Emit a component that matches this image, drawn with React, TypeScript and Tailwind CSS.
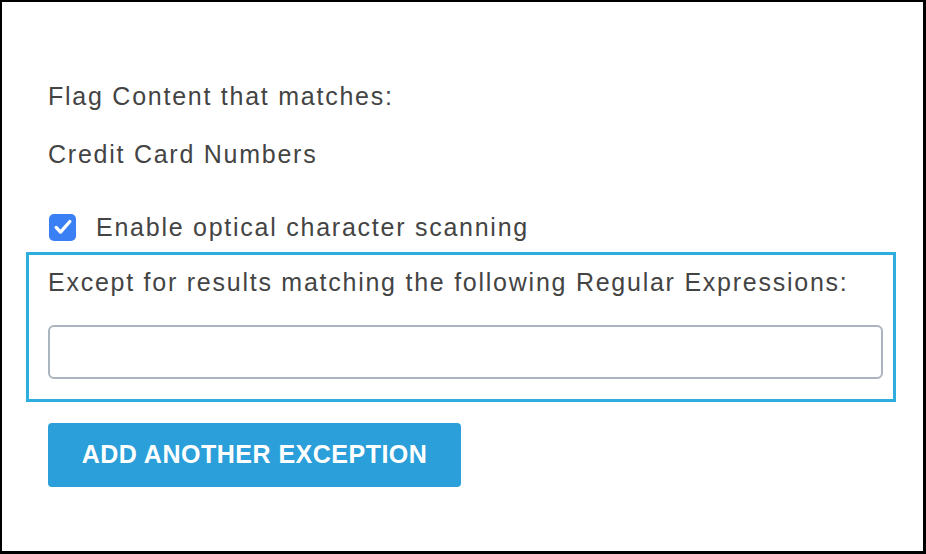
import React from "react";

export default function App() {
  return (
    <div
      className="w-[926px] h-[554px] bg-white border-black border-t-2 border-l-2 border-r-[3px] border-b-[3px] overflow-hidden text-[#444444]"
      style={{ fontFamily: '"Liberation Sans", Arial, sans-serif' }}
    >
      <div className="pt-[79px] pl-[46px] pr-[40px] flex flex-col">
        <div className="text-[25px] leading-[30px] tracking-[1.75px]">Flag Content that matches:</div>
        <div className="text-[25px] leading-[30px] tracking-[1.75px] mt-[28px]">Credit Card Numbers</div>
        <div className="flex items-center mt-[43px]">
          <div className="w-[27px] h-[27px] rounded-[5px] bg-[#3b7ff5] flex items-center justify-center ml-[1px]">
            <svg width="22" height="22" viewBox="0 0 24 24" fill="none">
              <path d="M4.5 12.5l4.8 5L19.5 6" stroke="white" strokeWidth="3.6" strokeLinecap="round" strokeLinejoin="round" />
            </svg>
          </div>
          <div className="text-[25px] leading-[30px] tracking-[1.75px] ml-[20px]">Enable optical character scanning</div>
        </div>
        <div className="-ml-[22px] mt-[10px] w-[870px] border-[3px] border-[#2eaedf] pl-[19px] pr-[10px] pt-[12px] pb-[20px]">
          <div className="text-[25px] leading-[30px] tracking-[1.75px]">Except for results matching the following Regular Expressions:</div>
          <div className="mt-[28px] w-[835px] h-[54px] rounded-[6px] border-2 border-[#aab4be] bg-white"></div>
        </div>
        <div className="mt-[21px] w-[413px] h-[64px] rounded-[4px] bg-[#2b9fd9] flex items-center justify-center text-white font-bold text-[25px] tracking-[0.5px]">
          ADD ANOTHER EXCEPTION
        </div>
      </div>
    </div>
  );
}
